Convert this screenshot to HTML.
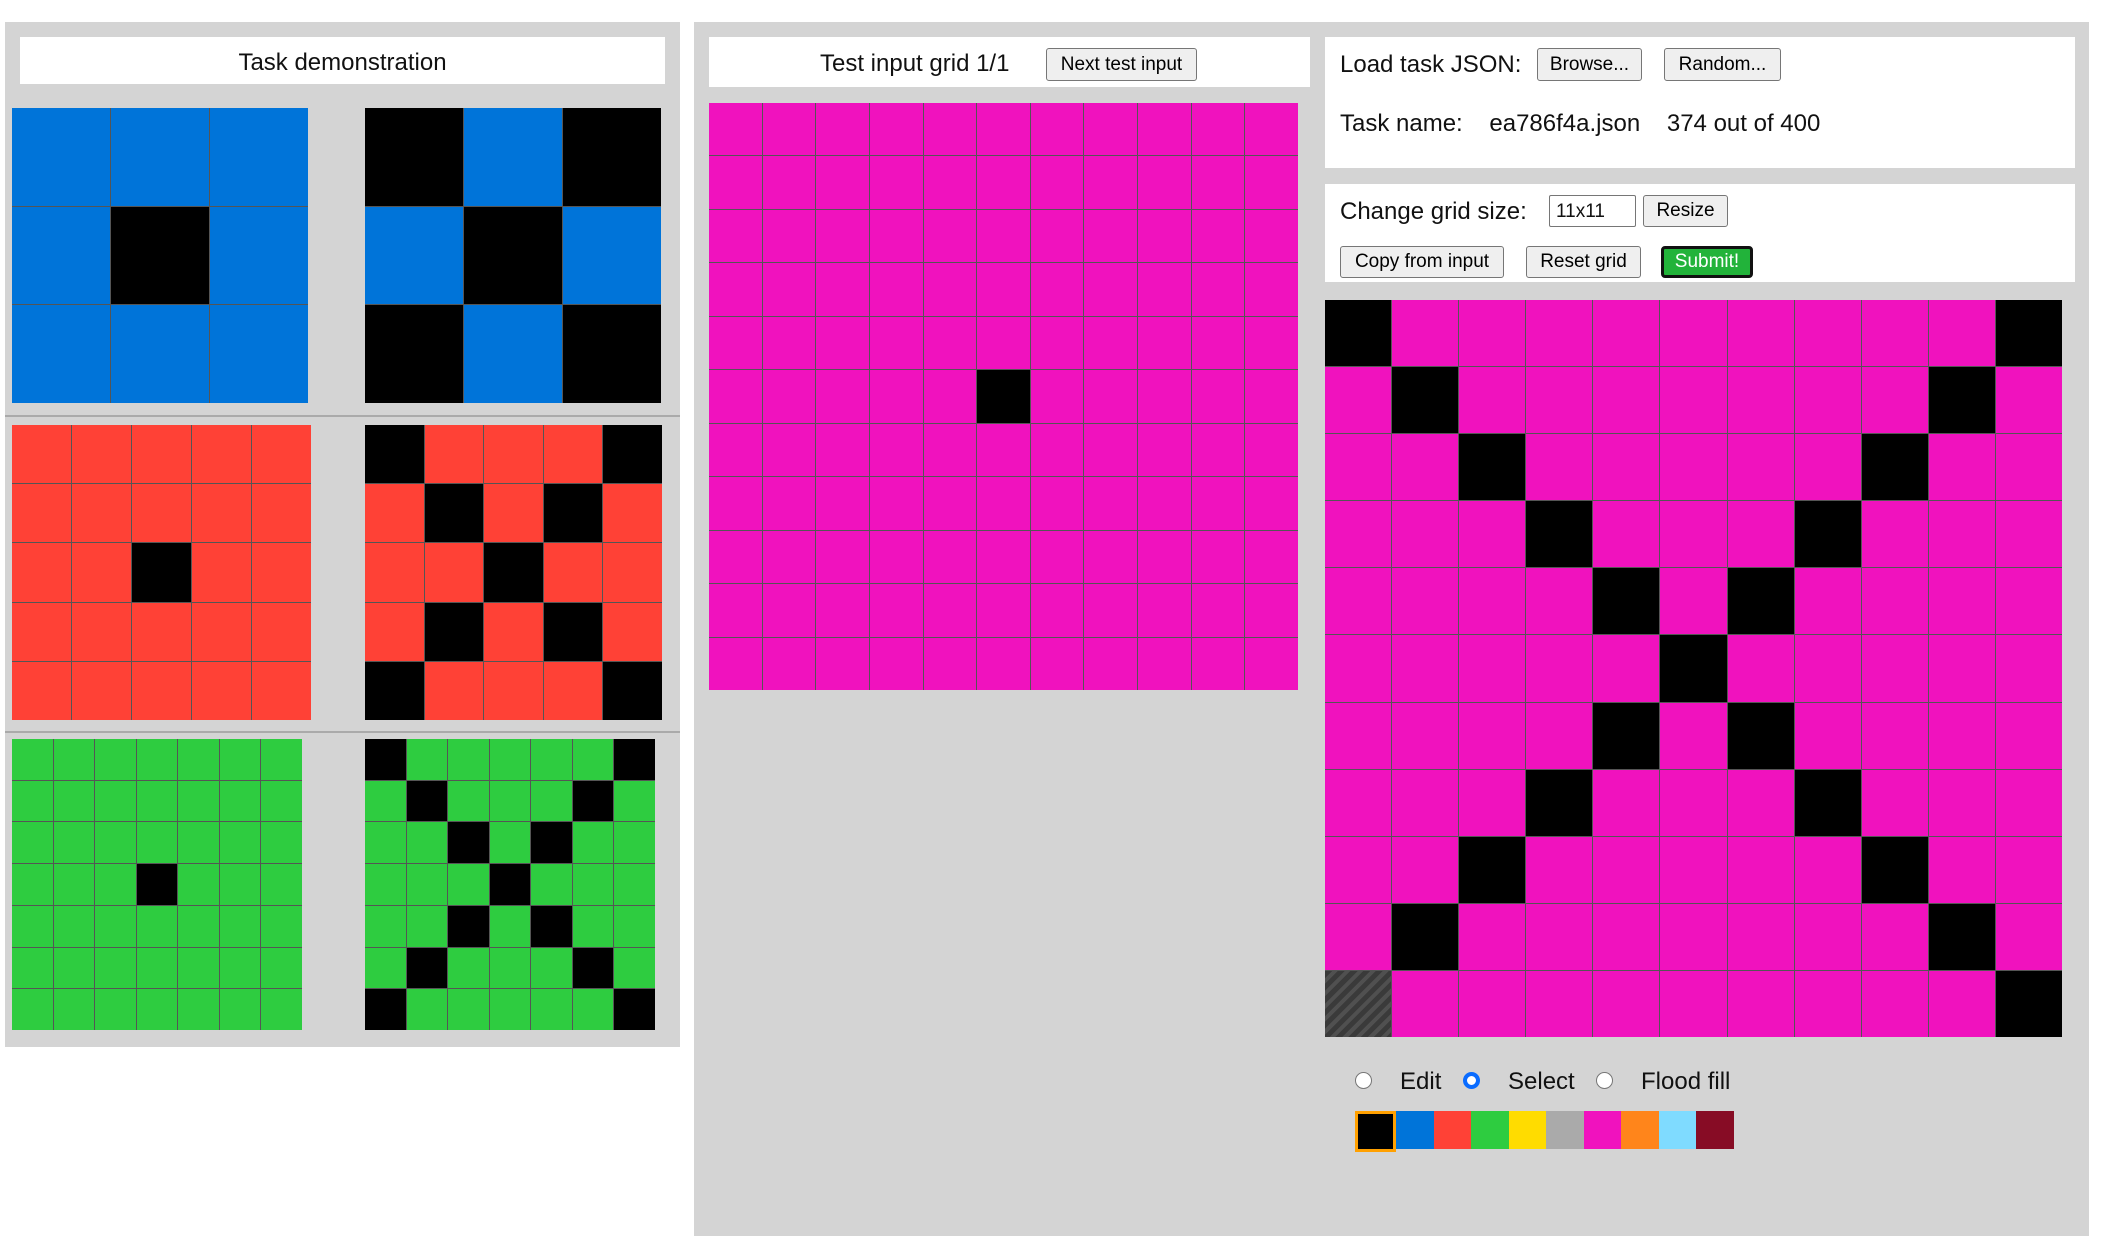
<!DOCTYPE html>
<html><head><meta charset="utf-8"><style>
body{margin:0;width:2127px;height:1236px;background:#fff;position:relative;overflow:hidden;font-family:"Liberation Sans",sans-serif;color:#111}
.abs{position:absolute}
.gray{background:#d4d4d4}
.white{background:#fff}
.grid{position:absolute;display:grid;background:#555;gap:1px;padding:0}
.btn{position:absolute;background:#efefef;border:1px solid #767676;border-radius:3px;font-size:19px;display:flex;align-items:center;justify-content:center;box-sizing:border-box;color:#000}
.t{position:absolute;font-size:24px;white-space:nowrap}
.radio{position:absolute;width:17px;height:17px;border-radius:50%;border:1px solid #767676;background:#fff;box-sizing:border-box}
</style></head><body>
<div class="abs gray" style="left:5px;top:22px;width:675px;height:1025px"></div>
<div class="abs white" style="left:20px;top:37px;width:645px;height:47px"></div>
<div class="t" style="left:20px;width:645px;top:49px;text-align:center">Task demonstration</div>
<div class="abs" style="left:5px;top:415px;width:675px;height:2px;background:#aaa"></div>
<div class="abs" style="left:5px;top:731px;width:675px;height:2px;background:#aaa"></div>

<div class="abs gray" style="left:694px;top:22px;width:1395px;height:1214px"></div>
<div class="abs white" style="left:709px;top:37px;width:601px;height:50px"></div>
<div class="t" style="left:820px;top:50px">Test input grid 1/1</div>
<div class="btn" style="left:1046px;top:48px;width:151px;height:33px">Next test input</div>

<div class="abs white" style="left:1325px;top:37px;width:750px;height:131px"></div>
<div class="t" style="left:1340px;top:51px">Load task JSON:</div>
<div class="btn" style="left:1537px;top:48px;width:105px;height:33px">Browse...</div>
<div class="btn" style="left:1664px;top:48px;width:117px;height:33px">Random...</div>
<div class="t" style="left:1340px;top:110px">Task name:&nbsp;&nbsp;&nbsp; ea786f4a.json&nbsp;&nbsp;&nbsp; 374 out of 400</div>

<div class="abs white" style="left:1325px;top:184px;width:750px;height:98px"></div>
<div class="t" style="left:1340px;top:198px">Change grid size:</div>
<div class="abs" style="left:1549px;top:195px;width:87px;height:32px;border:1px solid #767676;border-radius:2px;box-sizing:border-box;font-size:19px;padding:5px 6px;background:#fff">11x11</div>
<div class="btn" style="left:1643px;top:195px;width:85px;height:32px">Resize</div>
<div class="btn" style="left:1340px;top:246px;width:164px;height:32px">Copy from input</div>
<div class="btn" style="left:1526px;top:246px;width:115px;height:32px">Reset grid</div>
<div class="btn" style="left:1661px;top:246px;width:92px;height:32px;background:#22b33a;color:#fff;border:3px solid #111;border-radius:4px">Submit!</div>

<div class="radio" style="left:1355px;top:1072px"></div>
<div class="t" style="left:1400px;top:1068px">Edit</div>
<div class="radio" style="left:1463px;top:1072px;border:4px solid #0a6cff"></div>
<div class="t" style="left:1508px;top:1068px">Select</div>
<div class="radio" style="left:1596px;top:1072px"></div>
<div class="t" style="left:1641px;top:1068px">Flood fill</div>

<div id="pal" class="abs" style="left:1355px;top:1111px;height:38px;display:flex;align-items:flex-start"></div>

<div id="grids"></div>
<script>
var C=['#000','#0074D9','#FF4136','#2ECC40','#FFDC00','#AAAAAA','#F012BE','#FF851B','#7FDBFF','#870C25'];
function X(n,c){var a=[];for(var i=0;i<n;i++){var r=[];for(var j=0;j<n;j++)r.push(i==j||i+j==n-1?0:c);a.push(r);}return a;}
function D(n,c){var a=[];for(var i=0;i<n;i++){var r=[];for(var j=0;j<n;j++)r.push(i==(n-1)/2&&j==(n-1)/2?0:c);a.push(r);}return a;}
function G(x,y,w,h,m){var n=m.length,d=document.createElement('div');d.className='grid';
d.style.cssText='left:'+x+'px;top:'+y+'px;width:'+w+'px;height:'+h+'px;grid-template-columns:repeat('+n+',1fr);grid-template-rows:repeat('+n+',1fr)';
m.forEach(function(r){r.forEach(function(v){var c=document.createElement('div');
if(v<0)c.style.background='repeating-linear-gradient(135deg,#3a3a3a 0 5px,#505050 5px 9px)';else c.style.background=C[v];d.appendChild(c);});});
document.getElementById('grids').appendChild(d);}
G(12,108,296,295,D(3,1));G(365,108,296,295,X(3,1));
G(12,425,299,295,D(5,2));G(365,425,297,295,X(5,2));
G(12,739,290,291,D(7,3));G(365,739,290,291,X(7,3));
G(709,103,589,587,D(11,6));
var o=X(11,6);o[10][0]=-1;G(1325,300,737,737,o);
var p=document.getElementById('pal');
C.forEach(function(c,i){var s=document.createElement('div');s.style.cssText='width:37.5px;height:38px;box-sizing:border-box;flex:none;background:'+c+(i==0?';border:3px solid #ffa000;width:41px;height:41px':'');p.appendChild(s);});
</script>
</body></html>
